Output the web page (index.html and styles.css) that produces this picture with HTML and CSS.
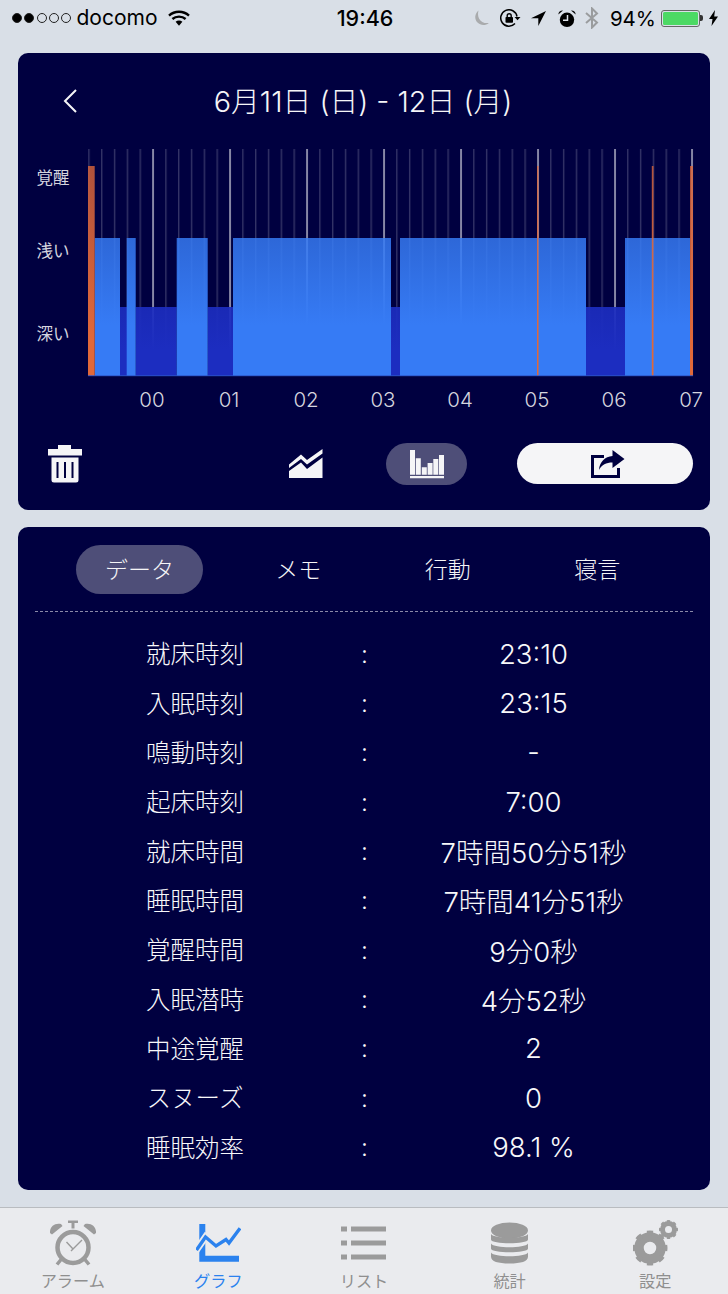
FILE: index.html
```html
<!DOCTYPE html>
<html lang="ja">
<head>
<meta charset="utf-8">
<title>グラフ</title>
<link rel="stylesheet" href="styles.css">
</head>
<body>
<div class="status">
  <div class="status-left">
    <span class="dot on"></span><span class="dot on"></span><span class="dot"></span><span class="dot"></span><span class="dot"></span>
    <span class="carrier">docomo</span>
    <svg class="wifi" viewBox="0 0 22 16" width="22" height="16"><g fill="none" stroke="#000" stroke-width="2.4"><path d="M1 5.6C6.6.5 15.4.5 21 5.6"/><path d="M4.4 9C8 5.8 14 5.8 17.6 9"/></g><path d="M7.6 11.8C9.6 10.2 12.4 10.2 14.4 11.8L11 15.8z"/></svg>
  </div>
  <div class="time">19:46</div>
  <div class="status-right">
    <svg class="ic-moon" viewBox="0 0 16 16" width="16" height="16"><path fill="#a9abad" d="M5.5 0.5C1.8 3.5 1 9 4.5 12.6C7.5 15.7 12.6 15.9 15.8 13C11.5 13.6 7.7 11.8 6 8.4C4.8 5.8 4.8 3 5.5.5z"/></svg>
    <svg class="ic-rot" viewBox="0 0 21 18" width="21" height="18"><path fill="none" stroke="#000" stroke-width="1.5" d="M17 7.500A8.200 8.200 0 1 0 15 14.500"/><path d="M14.500 8h6l-3 3.300z"/><rect x="5.500" y="8" width="7.500" height="5.800" rx=".8"/><path fill="none" stroke="#000" stroke-width="1.400" d="M7.200 8.500V6.800a2 2 0 0 1 4 0V8.500"/></svg>
    <svg class="ic-arrow" viewBox="0 0 15 15" width="15" height="15"><path d="M15 0L0 7.200h7.300V15z"/></svg>
    <svg class="ic-alarm" viewBox="0 0 18 17" width="18" height="17"><circle cx="9" cy="9.800" r="7.200"/><path d="M0.300 4.500Q.8.300 5 .5zM17.700 4.500Q17.200.3 13 .5z"/><path fill="none" stroke="#dfe4ea" stroke-width="1.500" d="M9.500 5v5.200H5"/></svg>
    <svg class="ic-bt" viewBox="0 0 14 22" width="14" height="22"><path fill="none" stroke="#9a9c9e" stroke-width="2" d="M1 6l11 9.500L7 20.500V1.500l5 5L1 16"/></svg>
    <span class="pct">94%</span>
    <span class="battery"><span class="battery-fill"></span></span><span class="nub"></span>
    <svg class="ic-bolt" viewBox="0 0 9 16" width="9" height="16"><path d="M6 0L0 9h3.500L2.500 16 9 6.500H5.200z"/></svg>
  </div>
</div>

<main class="page">
  <section class="card card-chart">
    <header class="chart-head">
      <svg class="back" viewBox="0 0 14 24" width="14" height="24"><path fill="none" stroke="#f5f5f7" stroke-width="2" d="M13 1L2 12l11 11"/></svg>
      <h1 class="title">6月11日 (日) - 12日 (月)</h1>
    </header>

    <svg class="chart" viewBox="18 140 692 275" width="692" height="275">
      <defs>
        <pattern id="ticks" patternUnits="userSpaceOnUse" x="88.200" y="0" width="12.830" height="400"><rect x="0" y="0" width="1.400" height="400" fill="#fff" fill-opacity=".2"/></pattern>
        <linearGradient id="gl" gradientUnits="userSpaceOnUse" x1="0" y1="238" x2="0" y2="325"><stop offset="0" stop-color="#367bf5" stop-opacity=".84"/><stop offset="1" stop-color="#367bf5"/></linearGradient>
        <linearGradient id="gd" gradientUnits="userSpaceOnUse" x1="0" y1="307" x2="0" y2="350"><stop offset="0" stop-color="#1c2dc0" stop-opacity=".92"/><stop offset="1" stop-color="#1c2dc0"/></linearGradient>
        <linearGradient id="go" gradientUnits="userSpaceOnUse" x1="0" y1="166" x2="0" y2="340"><stop offset="0" stop-color="#e0683a" stop-opacity=".78"/><stop offset="1" stop-color="#e0683a"/></linearGradient>
      </defs>
      <rect x="88" y="149" width="606" height="227" fill="url(#ticks)"/>
      <g fill="#fff" fill-opacity=".58">
        <rect x="152.300" y="149" width="1.500" height="227"/><rect x="229.300" y="149" width="1.500" height="227"/><rect x="306.300" y="149" width="1.500" height="227"/><rect x="383.300" y="149" width="1.500" height="227"/><rect x="460.300" y="149" width="1.500" height="227"/><rect x="537.300" y="149" width="1.500" height="227"/><rect x="614.300" y="149" width="1.500" height="227"/><rect x="691.300" y="149" width="1.500" height="227"/>
      </g>
      <g fill="url(#gd)">
        <rect x="120" y="307" width="7" height="69"/><rect x="135.700" y="307" width="41" height="69"/><rect x="207.700" y="307" width="25.500" height="69"/><rect x="391" y="307" width="9" height="69"/><rect x="586" y="307" width="39" height="69"/>
      </g>
      <g fill="url(#gl)">
        <rect x="94.700" y="238" width="25.300" height="138"/><rect x="126.700" y="238" width="9" height="138"/><rect x="176.700" y="238" width="31" height="138"/><rect x="233" y="238" width="158" height="138"/><rect x="400" y="238" width="186" height="138"/><rect x="625" y="238" width="65" height="138"/>
      </g>
      <g fill="url(#go)">
        <rect x="88" y="166" width="6.700" height="210"/><rect x="537" y="166" width="1.500" height="210"/><rect x="651.800" y="166" width="1.700" height="210"/><rect x="690" y="166" width="3" height="210"/>
      </g>
      <rect x="88" y="375.300" width="605" height=".9" fill="#2b55c8"/>
      <g class="y-label">
        <text x="53" y="184">覚醒</text><text x="53" y="257">浅い</text><text x="53" y="340">深い</text>
      </g>
      <g class="x-label">
        <text x="152" y="407">00</text><text x="229" y="407">01</text><text x="306" y="407">02</text><text x="383" y="407">03</text><text x="460" y="407">04</text><text x="537" y="407">05</text><text x="614" y="407">06</text><text x="691" y="407">07</text>
      </g>
    </svg>

    <div class="toolbar">
      <svg class="trash" viewBox="0 0 34 38" width="34" height="38"><path fill="#f5f5f7" d="M10 0h13v4h11v6.500H0V4h10zM3.500 12.500h27V35a2.500 2.500 0 0 1-2.500 2.500H6A2.500 2.500 0 0 1 3.500 35z"/><path fill="none" stroke="#00003f" stroke-width="2" d="M9.500 17v16M17 17v16M24.500 17v16"/></svg>
      <svg class="line-ic" viewBox="0 0 34 29" width="34" height="29"><path fill="#f5f5f7" d="M0 15.500L12 5.500L18 11L33.500 0V4.500L18 15.500L12 10L0 19zM0 22L12 13.500L18 20L33.500 8.500V29H0z"/></svg>
      <span class="bar-pill">
        <svg viewBox="0 0 34 29" width="34" height="29"><path fill="#f5f5f7" d="M0 0h5v24.700H0zM5.800 8.300h5v16.400h-5zM11.800 17.300h5v7.400h-5zM17.600 13h5v11.700h-5zM23.300 9h5v15.700h-5zM29 5h5v19.700h-5zM0 26h34v2.300H0z"/></svg>
      </span>
      <span class="share-pill">
        <svg viewBox="0 0 34 28" width="34" height="28"><path fill="none" stroke="#00003f" stroke-width="3" d="M13 6.500H1.500V26.500H27.500V18"/><path fill="#00003f" d="M21.500 0L33.500 9L21.500 18V12.500C15 12.500 11 14.500 8 20C8.500 12 14 6.500 21.500 6z"/></svg>
      </span>
    </div>
  </section>

  <section class="card card-data">
    <nav class="tabs">
      <span class="tab active">データ</span>
      <span class="tab">メモ</span>
      <span class="tab">行動</span>
      <span class="tab">寝言</span>
    </nav>
    <dl class="rows">
      <div class="row"><dt>就床時刻</dt><dd class="colon">:</dd><dd class="val">23:10</dd></div>
      <div class="row"><dt>入眠時刻</dt><dd class="colon">:</dd><dd class="val">23:15</dd></div>
      <div class="row"><dt>鳴動時刻</dt><dd class="colon">:</dd><dd class="val">-</dd></div>
      <div class="row"><dt>起床時刻</dt><dd class="colon">:</dd><dd class="val">7:00</dd></div>
      <div class="row"><dt>就床時間</dt><dd class="colon">:</dd><dd class="val">7時間50分51秒</dd></div>
      <div class="row"><dt>睡眠時間</dt><dd class="colon">:</dd><dd class="val">7時間41分51秒</dd></div>
      <div class="row"><dt>覚醒時間</dt><dd class="colon">:</dd><dd class="val">9分0秒</dd></div>
      <div class="row"><dt>入眠潜時</dt><dd class="colon">:</dd><dd class="val">4分52秒</dd></div>
      <div class="row"><dt>中途覚醒</dt><dd class="colon">:</dd><dd class="val">2</dd></div>
      <div class="row"><dt>スヌーズ</dt><dd class="colon">:</dd><dd class="val">0</dd></div>
      <div class="row"><dt>睡眠効率</dt><dd class="colon">:</dd><dd class="val">98.1 %</dd></div>
    </dl>
  </section>
</main>

<nav class="tabbar">
  <div class="tb-item">
    <svg class="tb-icon" viewBox="0 0 46 45" width="46" height="45">
      <circle cx="23" cy="27" r="15.500" fill="none" stroke="#9b9b9b" stroke-width="4.500"/>
      <path fill="#9b9b9b" d="M18 0h10v2.500h-3.500V8h-3V2.500H18zM0 12.500C-.5 6 5 2 11 3.500L12.500 5.500L2 14zM46 12.500C46.500 6 41 2 35 3.500L33.500 5.500L44 14z"/>
      <path fill="none" stroke="#9b9b9b" stroke-width="3.500" d="M11.500 38.500L7 44M34.500 38.500L39 44"/>
      <path fill="none" stroke="#9b9b9b" stroke-width="1.400" d="M16.500 21.500L23 28.500L32 19.500M21 30.500L23 28.500"/>
    </svg>
    <span class="tb-label">アラーム</span>
  </div>
  <div class="tb-item is-active">
    <svg class="tb-icon" viewBox="0 0 45 38" width="45" height="38">
      <path fill="#2b82ee" d="M3.300 0h6v31.700H43v6H3.300z"/>
      <path fill="none" stroke="#eaebee" stroke-width="7" d="M-1 28L9.500 13L20 22L30 15.500L33 19L44 4.300"/>
      <path fill="none" stroke="#2b82ee" stroke-width="3.300" d="M.5 26L9.500 13L20 22L30 15.500L33 19L44 4.300"/>
    </svg>
    <span class="tb-label">グラフ</span>
  </div>
  <div class="tb-item">
    <svg class="tb-icon" viewBox="0 0 45 33" width="45" height="33">
      <path fill="#9b9b9b" d="M0 0h6v5H0zM10 0h35v5H10zM0 14h6v5H0zM10 14h35v5H10zM0 28h6v5H0zM10 28h35v5H10z"/>
    </svg>
    <span class="tb-label">リスト</span>
  </div>
  <div class="tb-item">
    <svg class="tb-icon" viewBox="0 0 37 41" width="37" height="41">
      <ellipse cx="18.500" cy="8" rx="18.500" ry="8" fill="#9b9b9b"/>
      <path fill="#9b9b9b" d="M0 11.500C3 16.500 34 16.500 37 11.500V17C37 22 0 22 0 17zM0 21C3 26 34 26 37 21V26C37 31 0 31 0 26zM0 30C3 35 34 35 37 30V34C37 39 30 41 18.500 41S0 39 0 34z"/>
    </svg>
    <span class="tb-label">統計</span>
  </div>
  <div class="tb-item">
    <svg class="tb-icon" viewBox="0 0 45 45" width="45" height="45">
      <circle cx="17" cy="27.500" r="11" fill="none" stroke="#9b9b9b" stroke-width="9.500"/>
      <circle cx="17" cy="27.500" r="15" fill="none" stroke="#9b9b9b" stroke-width="5" pathLength="16" stroke-dasharray="1 1" stroke-dashoffset=".5"/>
      <circle cx="35.500" cy="9" r="6" fill="none" stroke="#9b9b9b" stroke-width="5"/>
      <circle cx="35.500" cy="9" r="8" fill="none" stroke="#9b9b9b" stroke-width="3" pathLength="16" stroke-dasharray="1 1" stroke-dashoffset=".5"/>
    </svg>
    <span class="tb-label">設定</span>
  </div>
</nav>
</body>
</html>
```
FILE: styles.css
```css
* { box-sizing: border-box; margin: 0; padding: 0; }
html, body { width: 728px; height: 1294px; overflow: hidden; }
body {
  background: #d9dfe7;
  font-family: Inter, "Noto Sans CJK JP", sans-serif;
  color: #f5f5f7;
  display: flex;
  flex-direction: column;
}
svg { display: block; flex: none; }

/* status bar */
.status {
  height: 36px;
  padding: 0 10px 0 12px;
  display: grid;
  grid-template-columns: 1fr auto 1fr;
  align-items: center;
  color: #000;
}
.status-left, .status-right { display: flex; align-items: center; }
.status-right { justify-content: flex-end; }
.dot {
  width: 10px; height: 10px;
  border-radius: 50%;
  border: 1px solid #222;
  margin-right: 2.3px;
}
.dot.on { background: #000; }
.carrier { font-size: 21px; margin-left: 3px; line-height: 36px; }
.wifi { margin-left: 10px; }
.time { font-size: 21.500px; font-weight: 500; }
.ic-moon { margin-right: 11px; }
.ic-rot { margin-right: 10px; }
.ic-arrow { margin-right: 12px; }
.ic-alarm { margin-right: 9px; }
.ic-bt { margin-right: 11px; }
.pct { font-size: 20.500px; font-weight: 400; margin-right: 5px; }
.battery {
  width: 39px; height: 17px;
  border: 1px solid #666;
  border-radius: 3px;
  padding: 1px;
  display: flex;
}
.battery-fill { flex: 1; background: #4cd964; border-radius: 1.5px; }
.nub { width: 3px; height: 6px; background: #333; border-radius: 0 2px 2px 0; margin-right: 6px; }

/* cards */
.page {
  flex: 1;
  padding: 17px 18px;
  display: flex;
  flex-direction: column;
  gap: 17px;
}
.card { background: #000040; border-radius: 10px; }
.card-chart { height: 457px; }
.card-data { height: 663px; padding: 18px 17px 0; }

.chart-head {
  height: 87px;
  padding: 9px 0 0 45px;
  display: flex;
  align-items: center;
  position: relative;
}
.title {
  position: absolute;
  left: 0; right: 2px; top: 5px; bottom: 0;
  display: flex;
  align-items: center;
  justify-content: center;
  font-size: 28.800px;
  font-weight: 300;
  white-space: nowrap;
}
.y-label text { font-size: 16.500px; fill: #d5d5df; text-anchor: middle; }
.x-label text { font-size: 20.500px; font-weight: 300; fill: #d5d5df; text-anchor: middle; }

.toolbar {
  height: 95px;
  padding: 28px 0 0 30px;
  display: flex;
  align-items: flex-start;
}
.trash { margin-top: 2px; }
.line-ic { margin: 6px 0 0 207px; }
.bar-pill {
  width: 81px; height: 42px;
  margin-left: 63px;
  border-radius: 21px;
  background: #4e4e78;
  display: flex;
  align-items: center;
  justify-content: center;
}
.share-pill {
  width: 176px; height: 41px;
  margin-left: 50px;
  border-radius: 21px;
  background: #f5f5f7;
  display: flex;
  align-items: center;
  justify-content: center;
  padding-left: 6px;
}

/* data */
.tabs {
  display: grid;
  grid-template-columns: repeat(4, 149.500px);
  padding-left: 39px;
  border-bottom: 1px dashed #8a8aa8;
  margin-bottom: 17px;
  height: 67px;
}
.tab {
  height: 49px;
  width: 127px;
  justify-self: center;
  border-radius: 25px;
  display: flex;
  align-items: center;
  justify-content: center;
  font-size: 23px;
  font-weight: 300;
  padding-bottom: 3px;
}
.tab.active { background: #4e4e78; justify-self: start; margin-left: 2px; }
.rows { display: flex; flex-direction: column; }
.row {
  height: 49.350px;
  display: grid;
  grid-template-columns: 320px 19px 1fr;
  align-items: center;
  font-size: 24.500px;
  font-weight: 300;
  color: #f8f8fa;
}
.row dt { text-align: center; padding-bottom: 2px; }
.colon { text-align: center; }
.val { text-align: center; font-size: 27.500px; }

/* tab bar */
.tabbar {
  height: 87px;
  background: #eaebee;
  border-top: 1px solid #b9bcc0;
  display: grid;
  grid-template-columns: repeat(5, 145.600px);
  flex: none;
}
.tb-item {
  position: relative;
  display: flex;
  flex-direction: column;
  align-items: center;
  color: #8f8f8f;
}
.tb-item.is-active { color: #2b82ee; }
.tb-icon { margin-top: 10px; height: 50px; }
.tb-label {
  position: absolute;
  left: 0; right: 0; top: 64px;
  text-align: center;
  font-size: 16.200px;
  line-height: 18px;
}
```
